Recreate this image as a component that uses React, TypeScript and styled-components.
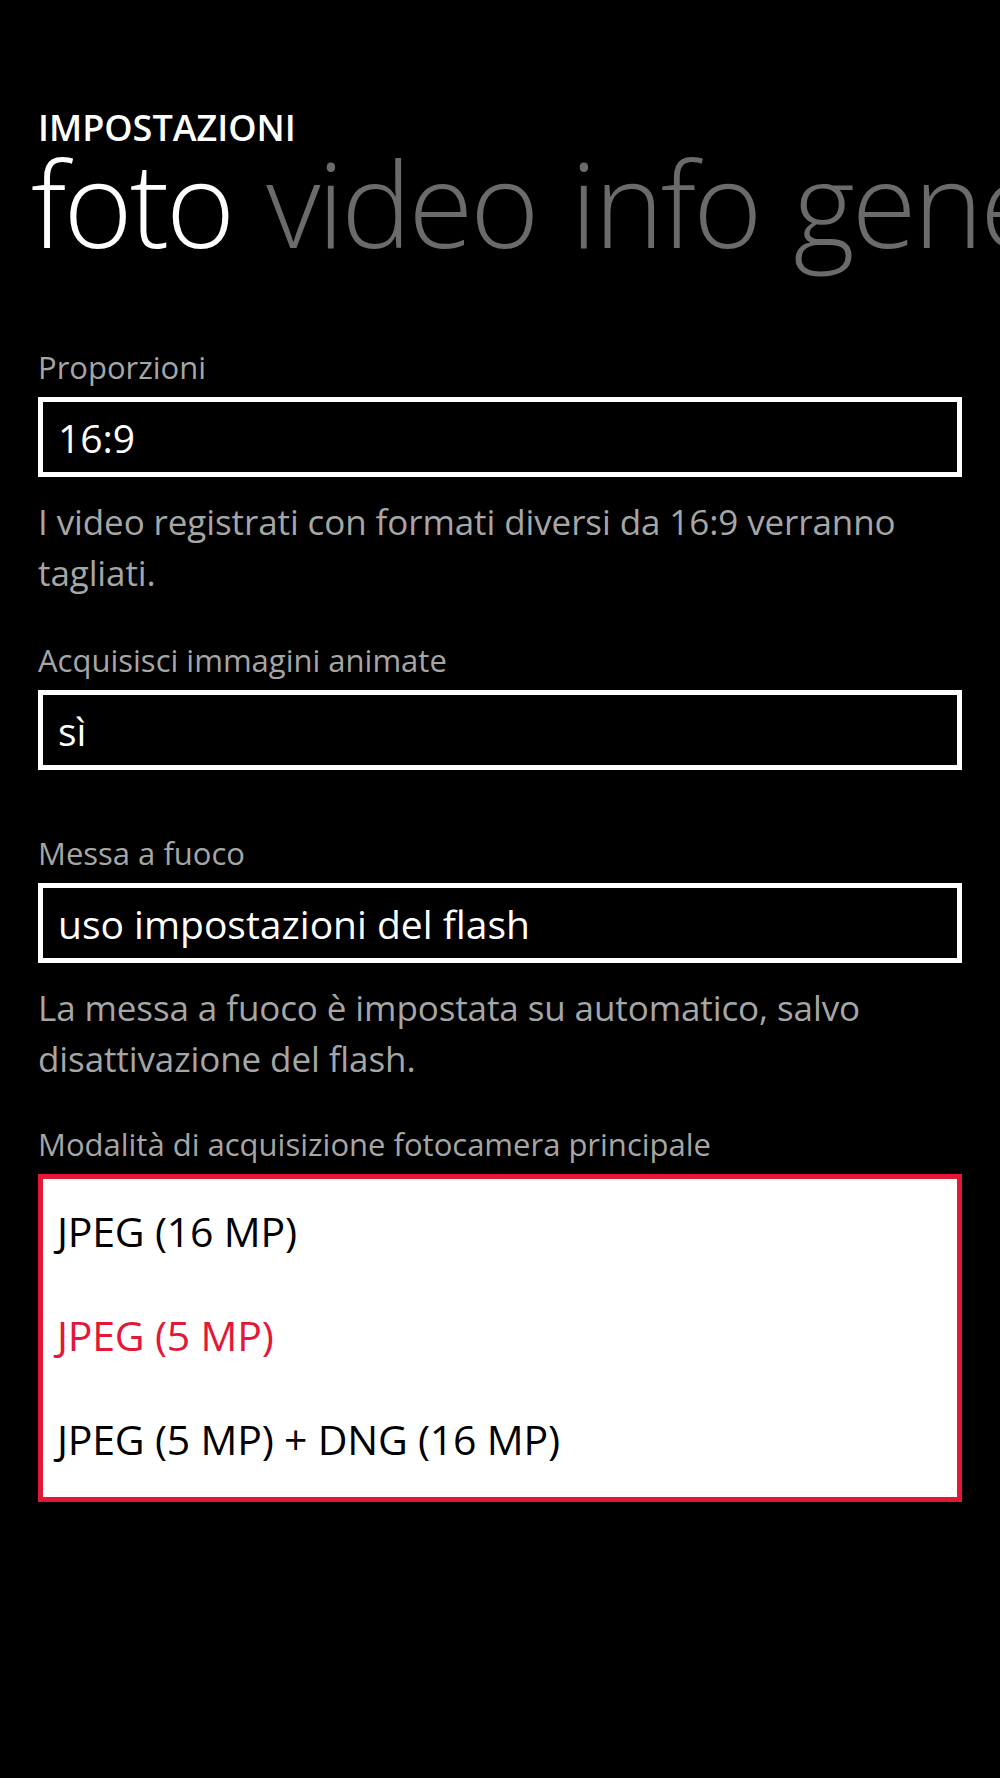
import React from 'react';
import styled, { createGlobalStyle } from 'styled-components';

const GlobalStyle = createGlobalStyle`
  html, body {
    margin: 0;
    padding: 0;
    background: #000;
  }
  body {
    font-family: "Open Sans", "Noto Sans", sans-serif;
    color: #fff;
  }
`;

const Root = styled.div`
  width: 1000px;
  height: 1778px;
  background: #000;
  overflow: hidden;
`;

const Header = styled.div`
  padding-top: 108px;
`;

const AppTitle = styled.div`
  padding-left: 38px;
  font-size: 36px;
  font-weight: 600;
  line-height: 40px;
`;

const Pivot = styled.div`
  display: flex;
  gap: 34px;
  padding-left: 31px;
  white-space: nowrap;
  font-size: 118px;
  font-weight: 300;
  line-height: 110px;
  letter-spacing: -3px;
`;

const PivotItem = styled.span<{ $active?: boolean }>`
  color: ${(p) => (p.$active ? '#ffffff' : '#6b6b6b')};
`;

const Content = styled.div`
  padding: 0 38px;
  margin-top: 89px;
`;

const Field = styled.div<{ $gap?: number }>`
  margin-top: ${(p) => p.$gap ?? 0}px;
`;

const Label = styled.div`
  font-size: 31px;
  line-height: 40px;
  color: #a6a6a6;
`;

const Picker = styled.div`
  margin-top: 10px;
  height: 80px;
  box-sizing: border-box;
  border: 5px solid #fff;
  display: flex;
  align-items: center;
  padding-left: 15px;
  font-size: 39px;
  color: #fff;
`;

const Hint = styled.div`
  margin-top: 19px;
  font-size: 35px;
  line-height: 51px;
  letter-spacing: -0.1px;
  color: #a6a6a6;
`;

const OptionList = styled.div`
  margin-top: 10px;
  height: 328px;
  box-sizing: border-box;
  border: 5px solid #e31837;
  background: #fff;
  display: flex;
  flex-direction: column;
  justify-content: center;
  padding: 0 0 6px 14px;
`;

const Option = styled.div<{ $selected?: boolean }>`
  height: 105px;
  display: flex;
  align-items: center;
  font-size: 41px;
  letter-spacing: -0.2px;
  color: ${(p) => (p.$selected ? '#e31837' : '#000')};
`;

const App: React.FC = () => {
  return (
    <Root>
      <GlobalStyle />
      <Header>
        <AppTitle>IMPOSTAZIONI</AppTitle>
        <Pivot>
          <PivotItem $active>foto</PivotItem>
          <PivotItem>video</PivotItem>
          <PivotItem>info</PivotItem>
          <PivotItem>generale</PivotItem>
        </Pivot>
      </Header>

      <Content>
        <Field>
          <Label>Proporzioni</Label>
          <Picker>16:9</Picker>
          <Hint>I video registrati con formati diversi da 16:9 verranno tagliati.</Hint>
        </Field>

        <Field $gap={42}>
          <Label>Acquisisci immagini animate</Label>
          <Picker>sì</Picker>
        </Field>

        <Field $gap={63}>
          <Label>Messa a fuoco</Label>
          <Picker>uso impostazioni del flash</Picker>
          <Hint>La messa a fuoco è impostata su automatico, salvo disattivazione del flash.</Hint>
        </Field>

        <Field $gap={40}>
          <Label>Modalità di acquisizione fotocamera principale</Label>
          <OptionList>
            <Option>JPEG (16 MP)</Option>
            <Option $selected>JPEG (5 MP)</Option>
            <Option>JPEG (5 MP) + DNG (16 MP)</Option>
          </OptionList>
        </Field>
      </Content>
    </Root>
  );
};

export default App;
